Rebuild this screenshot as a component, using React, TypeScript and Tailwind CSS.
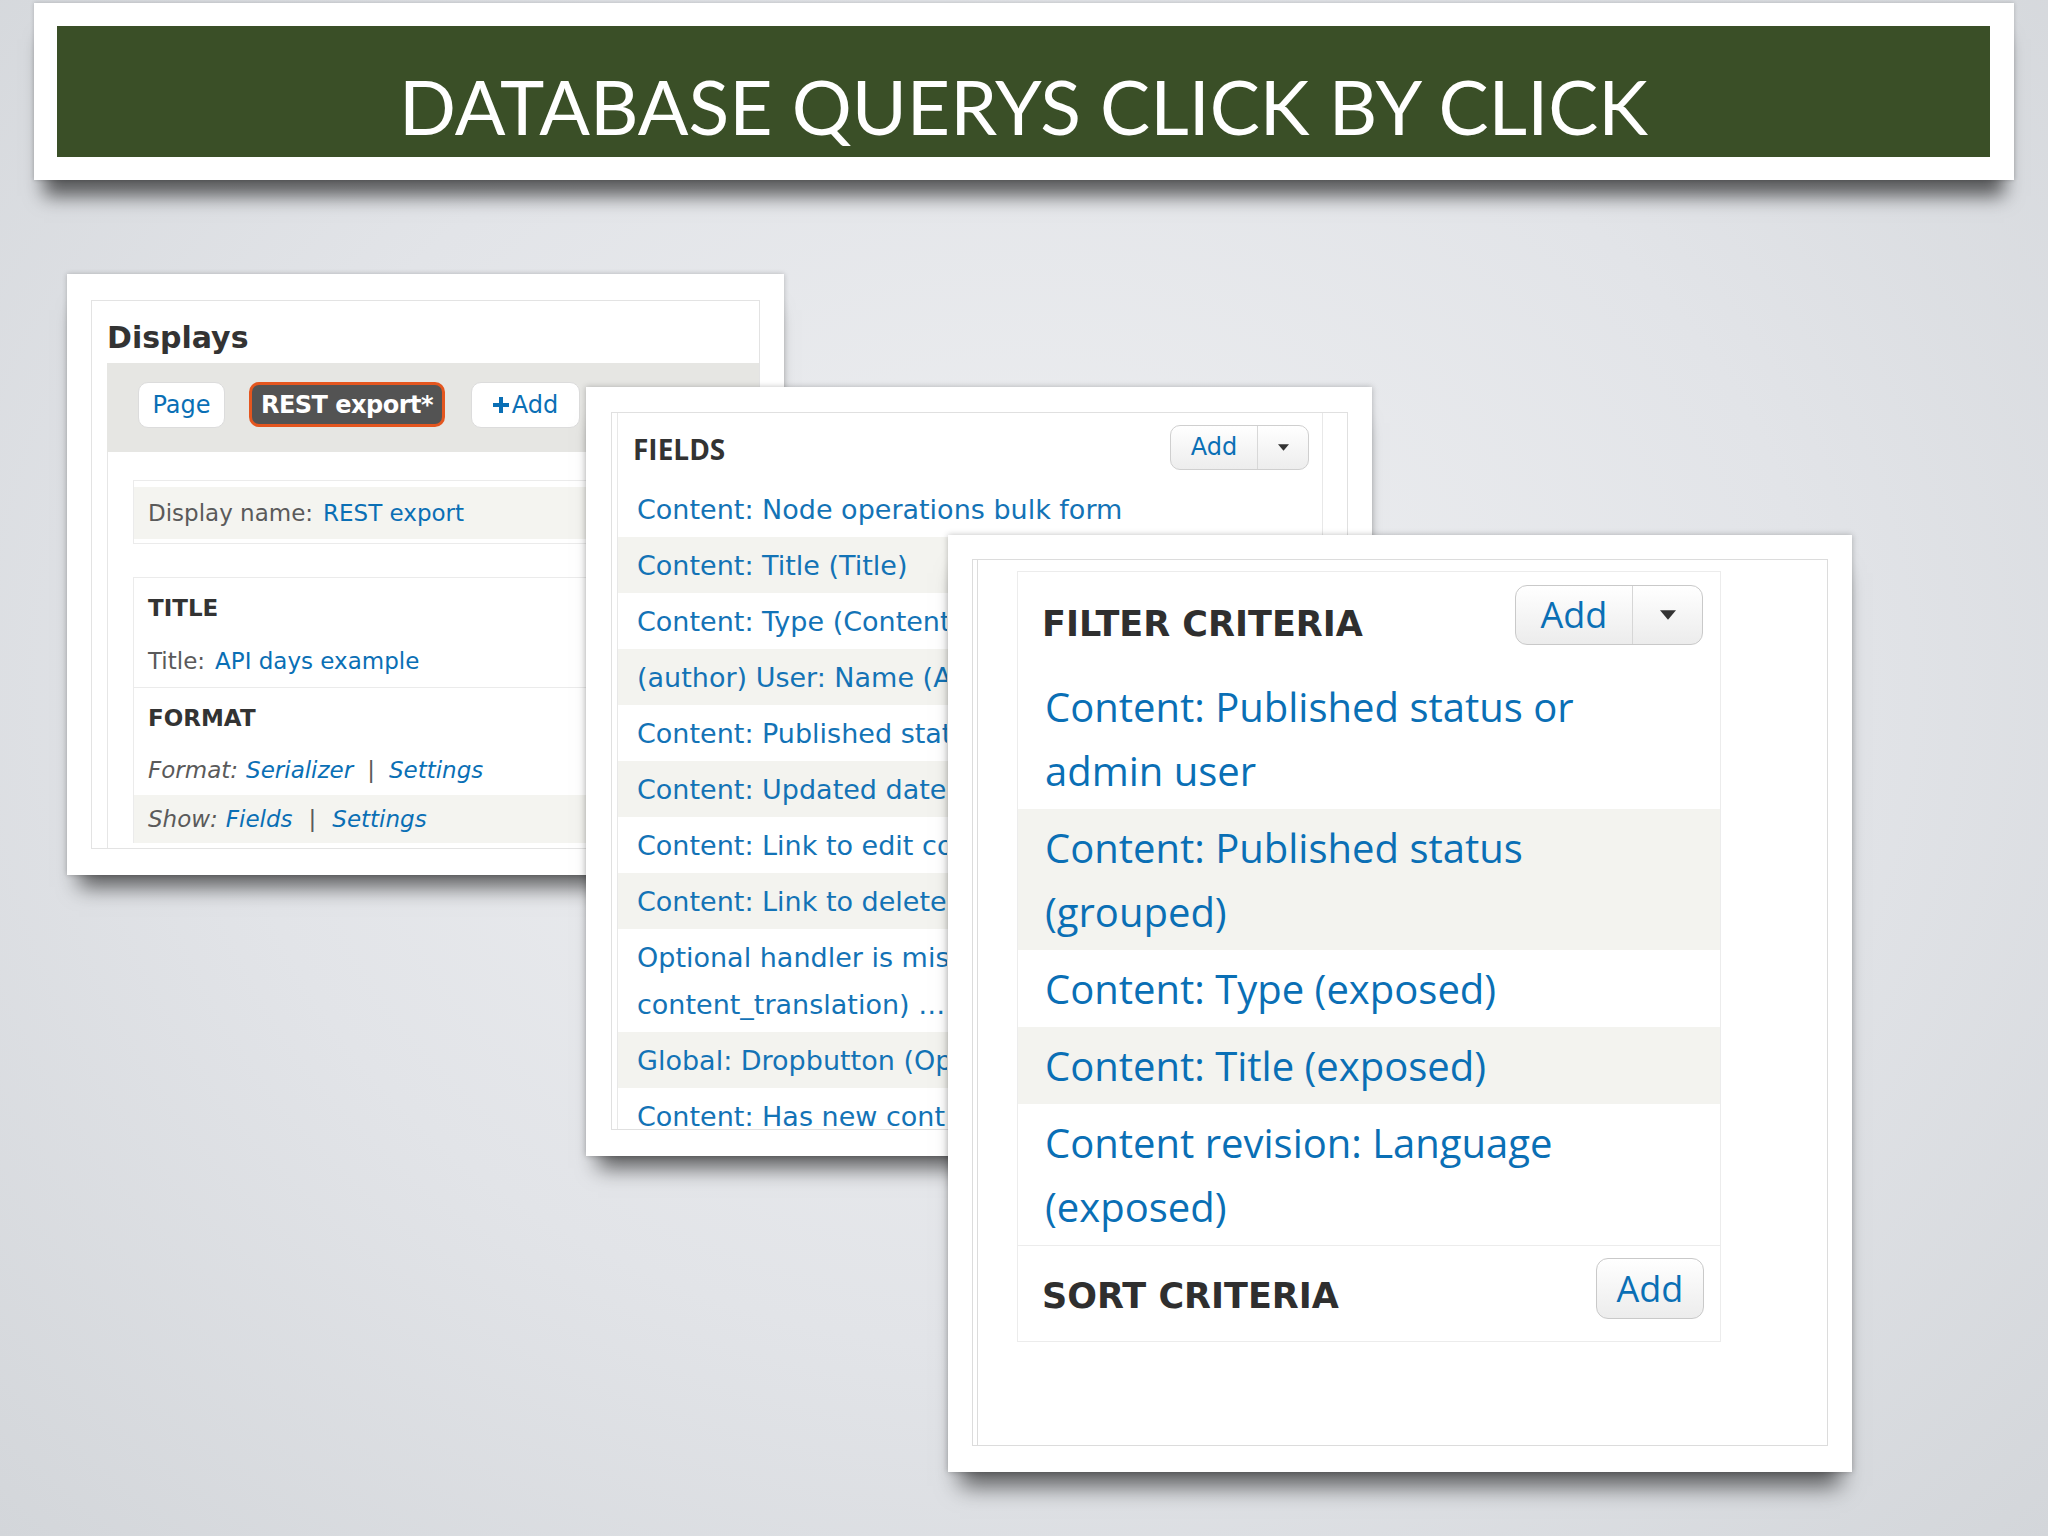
import React from "react";

// rows 2+ are covered by the filter panel in the screenshot, only their start shows
const FIELD_ROWS: string[][] = [
  ["Content: Node operations bulk form"],
  ["Content: Title (Title)"],
  ["Content: Type (Content"],
  ["(author) User: Name (A"],
  ["Content: Published stat"],
  ["Content: Updated date"],
  ["Content: Link to edit co"],
  ["Content: Link to delete"],
  ["Optional handler is mis", "content_translation) …"],
  ["Global: Dropbutton (Op"],
  ["Content: Has new cont"],
];

const FILTER_ROWS: string[][] = [
  ["Content: Published status or", "admin user"],
  ["Content: Published status", "(grouped)"],
  ["Content: Type (exposed)"],
  ["Content: Title (exposed)"],
  ["Content revision: Language", "(exposed)"],
];

function Caret({ w, h }: { w: number; h: number }) {
  return (
    <svg width={w} height={h} viewBox="0 0 10 6">
      <polygon points="0,0 10,0 5,6" fill="#333" />
    </svg>
  );
}

// panel 1: the "Displays" screenshot
function DisplaysPanel() {
  return (
    <div className="absolute left-[67px] top-[274px] w-[717px] h-[601px] bg-white px-[24px] py-[26px] shadow-[0_24px_20px_-12px_rgba(0,0,0,0.6),0_0_5px_rgba(0,0,0,0.22)] font-['DejaVu_Sans',sans-serif]">
      <div className="h-full border border-[#e3e3e3] flex flex-col overflow-hidden">
        <div className="h-[62px] pl-[15px] pt-[12px] flex items-center text-[30px] font-bold text-[#333] leading-none">
          Displays
        </div>
        <div className="ml-[15px] h-[89px] shrink-0 bg-[#e6e6e3] flex items-center pl-[31px] pb-[6px]">
          <div className="w-[87px] h-[46px] rounded-[10px] bg-white border border-[#dcdcdc] flex items-center justify-center text-[24px] text-[#0a6fb5]">
            Page
          </div>
          <div className="ml-[24px] w-[196px] h-[45px] rounded-[10px] bg-[#535353] border-[3px] border-[#e4561f] flex items-center justify-center text-[24px] font-bold tracking-[-0.5px] text-white">
            REST export*
          </div>
          <div className="ml-[26px] w-[109px] h-[46px] rounded-[10px] bg-white border border-[#dcdcdc] flex items-center justify-center gap-[3px] text-[24px] text-[#0a6fb5]">
            <svg width="16" height="16" viewBox="0 0 16 16">
              <path d="M6 0h4v6h6v4h-6v6h-4v-6h-6v-4h6z" fill="#0a6fb5" />
            </svg>
            Add
          </div>
        </div>
        <div className="ml-[15px] flex-1 border-l border-[#e6e6e6] pl-[25px] pt-[28px] text-[23px] overflow-hidden">
          <div className="border border-[#ebebeb] pt-[6px] pb-[4px]">
            <div className="h-[52px] bg-[#f4f4f0] flex items-center pl-[14px] whitespace-nowrap">
              <span className="text-[#5a5a5a]">Display name:</span>
              <span className="ml-[10px] text-[#0a6fb5]">REST export</span>
            </div>
          </div>
          <div className="mt-[33px] border-t border-l border-[#ebebeb] whitespace-nowrap">
            <div className="border-b border-[#ebebeb] pt-[18px] pb-[12px] pl-[14px]">
              <div className="leading-[24px] font-bold text-[#333]">TITLE</div>
              <div className="mt-[27px] leading-[28px]">
                <span className="text-[#5a5a5a]">Title:</span>
                <span className="ml-[10px] text-[#0a6fb5]">API days example</span>
              </div>
            </div>
            <div className="pt-[18px]">
              <div className="pl-[14px] leading-[24px] font-bold text-[#333]">FORMAT</div>
              <div className="mt-[26px] pl-[14px] leading-[28px] italic">
                <span className="text-[#5a5a5a]">Format:</span>
                <span className="ml-[8px] text-[#0a6fb5]">Serializer</span>
                <span className="mx-[14px] text-[#5a5a5a]">|</span>
                <span className="text-[#0a6fb5]">Settings</span>
              </div>
              <div className="mt-[11px] h-[48px] bg-[#f4f4f0] pl-[14px] flex items-center italic">
                <span className="text-[#5a5a5a]">Show:</span>
                <span className="ml-[8px] text-[#0a6fb5]">Fields</span>
                <span className="mx-[16px] text-[#5a5a5a]">|</span>
                <span className="text-[#0a6fb5]">Settings</span>
              </div>
            </div>
          </div>
        </div>
      </div>
    </div>
  );
}

// panel 2: the fields list
function FieldsPanel() {
  return (
    <div className="absolute left-[586px] top-[387px] w-[786px] h-[769px] bg-white pt-[25px] pl-[25px] pr-[24px] pb-[26px] shadow-[0_24px_20px_-12px_rgba(0,0,0,0.6),0_0_6px_rgba(0,0,0,0.25)] font-['DejaVu_Sans',sans-serif]">
      <div className="h-full border border-[#e0e0e0] pl-[5px] pr-[24px] overflow-hidden">
        <div className="h-full border-l border-r border-[#e8e8e8] flex flex-col">
          <div className="h-[68px] shrink-0 flex items-center justify-between pl-[15px] pr-[13px]">
            <span className="pt-[4px] font-['Open_Sans',sans-serif] font-bold text-[28px] text-[#333] leading-none">
              FIELDS
            </span>
            <div className="w-[139px] h-[45px] rounded-[10px] border border-[#cfcfcf] bg-[linear-gradient(#ffffff,#ededed)] flex">
              <div className="w-[86px] flex items-center justify-center text-[24px] text-[#0a6fb5]">Add</div>
              <div className="flex-1 border-l border-[#d8d8d8] flex items-center justify-center">
                <Caret w={11} h={7} />
              </div>
            </div>
          </div>
          {FIELD_ROWS.map((lines, i) => (
            <div
              key={i}
              className={
                "shrink-0 pl-[19px] py-[4.5px] text-[27px] leading-[47px] text-[#1373b6] whitespace-nowrap " +
                (i % 2 === 1 ? "bg-[#f3f3ef]" : "bg-white")
              }
            >
              <div className={i === 0 ? "" : "w-[310px] overflow-hidden"}>
                {lines.map((l) => (
                  <div key={l}>{l}</div>
                ))}
              </div>
            </div>
          ))}
        </div>
      </div>
    </div>
  );
}

// panel 3: filter + sort criteria
function FilterPanel() {
  return (
    <div className="absolute left-[948px] top-[535px] w-[904px] h-[937px] bg-white pt-[24px] px-[24px] pb-[26px] shadow-[0_26px_22px_-12px_rgba(0,0,0,0.6),0_0_6px_rgba(0,0,0,0.25)] font-['Open_Sans',sans-serif]">
      <div className="h-full border border-[#dcdcdc] pl-[4px] overflow-hidden">
        <div className="h-full border-l border-[#dcdcdc] pt-[11px] pl-[39px] pr-[106px]">
          <div className="border border-[#ececec] flex flex-col">
            <div className="h-[96px] flex items-start justify-between pl-[24px] pr-[17px]">
              <span className="mt-[30px] leading-[44px] font-['DejaVu_Sans',sans-serif] text-[35px] font-bold text-[#2f2f2f]">
                FILTER CRITERIA
              </span>
              <div className="mt-[13px] w-[188px] h-[60px] rounded-[12px] border border-[#c9c9c9] bg-[linear-gradient(#ffffff,#ececec)] flex">
                <div className="w-[116px] flex items-center justify-center text-[36px] text-[#0a6fb5]">Add</div>
                <div className="flex-1 border-l border-[#d6d6d6] flex items-center justify-center">
                  <Caret w={16} h={10} />
                </div>
              </div>
            </div>
            {FILTER_ROWS.map((lines, i) => (
              <div
                key={i}
                className={
                  "pl-[27px] py-[6.5px] text-[40px] leading-[64px] text-[#0a6fb5] " +
                  (i % 2 === 1 ? "bg-[#f3f3ef]" : "bg-white")
                }
              >
                {lines.map((l) => (
                  <div key={l}>{l}</div>
                ))}
              </div>
            ))}
            <div className="h-[96px] border-t border-[#ececec] flex items-start justify-between pl-[24px] pr-[16px]">
              <span className="mt-[28px] leading-[44px] font-['DejaVu_Sans',sans-serif] text-[35px] font-bold text-[#2f2f2f]">
                SORT CRITERIA
              </span>
              <div className="mt-[12px] w-[108px] h-[61px] rounded-[12px] border border-[#c9c9c9] bg-[linear-gradient(#ffffff,#ececec)] flex items-center justify-center text-[36px] text-[#0a6fb5]">
                Add
              </div>
            </div>
          </div>
        </div>
      </div>
    </div>
  );
}

export default function App() {
  return (
    <div className="relative w-[2048px] h-[1536px] overflow-hidden bg-[radial-gradient(ellipse_at_50%_45%,#eff0f2_0%,#e2e4e8_55%,#d3d6da_100%)]">
      {/* slide title */}
      <div className="ml-[34px] mt-[3px] w-[1980px] p-[23px] pr-[24px] bg-white shadow-[0_26px_18px_-10px_rgba(0,0,0,0.6),0_0_4px_rgba(0,0,0,0.2)]">
        <div className="h-[131px] bg-[#3a4f27] flex items-center justify-center pt-[30px]">
          <h1 className="font-['Lato',sans-serif] text-[75px] leading-none text-white">
            DATABASE QUERYS CLICK BY CLICK
          </h1>
        </div>
      </div>

      <DisplaysPanel />
      <FieldsPanel />
      <FilterPanel />
    </div>
  );
}
